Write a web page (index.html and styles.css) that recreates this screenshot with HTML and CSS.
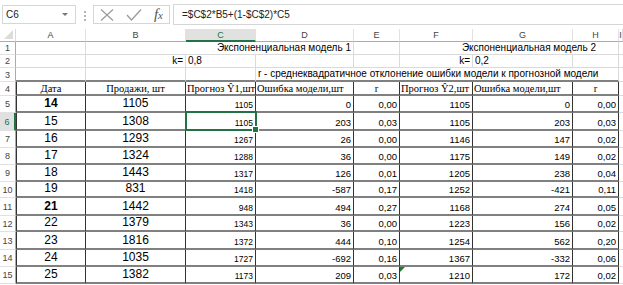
FILE: index.html
```html
<!DOCTYPE html>
<html lang="ru">
<head>
  <meta charset="UTF-8">
  <title>Экспоненциальная модель</title>
  <link rel="stylesheet" href="styles.css">
</head>
<body>

  <div class="fbar">
    <div class="namebox"><span>C6</span><span class="caret"></span></div>
    <div class="grip"></div>
    <div class="fbtns">
      <svg width="14" height="12" viewBox="0 0 14 12"><path d="M1 0.5 L13 11.5 M13 0.5 L1 11.5" stroke="#9a9a9a" stroke-width="1.2" fill="none"/></svg>
      <svg width="16" height="12" viewBox="0 0 16 12"><path d="M1 6 L5.5 11 L15 0.5" stroke="#9a9a9a" stroke-width="1.3" fill="none"/></svg>
      <span class="fx">f<i>x</i></span>
    </div>
    <div class="formula">=$C$2*B5+(1-$C$2)*C5</div>
  </div>

  <div class="sheet" id="sheet"></div>

  <script>
    const sheet = document.getElementById('sheet');

    const data = [
      [5, '14', '1105', '1105', '0', '0,00', '1105', '0', '0,00'],
      [6, '15', '1308', '1105', '203', '0,03', '1105', '203', '0,03'],
      [7, '16', '1293', '1267', '26', '0,00', '1146', '147', '0,02'],
      [8, '17', '1324', '1288', '36', '0,00', '1175', '149', '0,02'],
      [9, '18', '1443', '1317', '126', '0,01', '1205', '238', '0,04'],
      [10, '19', '831', '1418', '-587', '0,17', '1252', '-421', '0,11'],
      [11, '21', '1442', '948', '494', '0,27', '1168', '274', '0,05'],
      [12, '22', '1379', '1343', '36', '0,00', '1223', '156', '0,02'],
      [13, '23', '1816', '1372', '444', '0,10', '1254', '562', '0,20'],
      [14, '24', '1035', '1727', '-692', '0,16', '1367', '-332', '0,06'],
      [15, '25', '1382', '1173', '209', '0,03', '1210', '172', '0,02']
    ];

    function cell(cls, text) {
      const d = document.createElement('div');
      d.className = 'c ' + cls;
      if (text) d.textContent = text;
      sheet.appendChild(d);
      return d;
    }

    // заголовки столбцов
    cell('corner');
    ['A', 'B', 'C', 'D', 'E', 'F', 'G', 'H', 'I'].forEach(l => {
      cell('ch' + (l === 'C' ? ' ch-sel' : ''), l);
    });

    // строка 1
    cell('rh', '1');
    cell('g');
    cell('g span3 right', 'Экспоненциальная модель 1');
    cell('g');
    cell('g span3 right m2', 'Экспоненциальная модель 2');
    cell('g');

    // строка 2
    cell('rh', '2');
    cell('g');
    cell('g right', 'k=');
    cell('g', '0,8');
    cell('g'); cell('g');
    cell('g right', 'k=');
    cell('g', '0,2');
    cell('g'); cell('g');

    // строка 3
    cell('rh', '3');
    cell('g top');
    cell('g top');
    cell('g top');
    cell('g top span5', 'r - среднеквадратичное отклонение ошибки модели к прогнозной модели');
    cell('g');

    // строка 4 — шапка таблицы
    cell('rh', '4');
    cell('t first hd center', 'Дата');
    cell('t hd center', 'Продажи, шт');
    cell('t hd', 'Прогноз Ŷ1,шт');
    cell('t hd', 'Ошибка модели,шт');
    cell('t hd center', 'r');
    cell('t hd', 'Прогноз Ŷ2,шт');
    cell('t hd', 'Ошибка модели,шт');
    cell('t hd center', 'r');
    cell('g');

    data.forEach(r => {
      const n = r[0];
      cell('rh' + (n === 6 ? ' rh-sel' : ''), String(n));
      cell('t first big center' + (n === 5 || n === 11 ? ' bold' : ''), r[1]);
      cell('t big center', r[2]);
      cell('t small right' + (n === 6 ? ' active' : ''), r[3]);
      cell('t num right', r[4]);
      cell('t num right', r[5]);
      cell('t num right' + (n === 15 ? ' flag' : ''), r[6]);
      cell('t num right', r[7]);
      cell('t num right', r[8]);
      cell('g');
    });
  </script>
</body>
</html>
```

FILE: styles.css
```css
body {
  margin: 0;
  width: 623px;
  height: 285px;
  overflow: hidden;
  background-color: #fff;
  font-family: "Liberation Sans", Arial, sans-serif;
  color: #000;
}

/* строка формул */
.fbar {
  display: flex;
  align-items: flex-start;
  height: 29px;
  padding-top: 4px;
  box-sizing: border-box;
}

.namebox {
  margin: 1px 0 0 2px;
  width: 74px;
  height: 19px;
  border: 1px solid #d6d6d6;
  box-sizing: border-box;
  display: flex;
  align-items: center;
  justify-content: space-between;
  padding: 0 7px 0 3px;
  font-size: 10px;
  color: #222;
}

.caret {
  border-left: 3px solid transparent;
  border-right: 3px solid transparent;
  border-top: 3px solid #777;
}

.grip {
  margin: 7px 7px 0 8px;
  height: 10px;
  border-left: 2px dotted #b5b5b5;
}

.fbtns {
  margin-top: 1px;
  width: 77px;
  height: 19px;
  border: 1px solid #d6d6d6;
  box-sizing: border-box;
  display: flex;
  align-items: center;
  justify-content: space-between;
  padding: 0 6px 0 6px;
}

.fx {
  font-family: "Liberation Serif", serif;
  font-style: italic;
  font-size: 15px;
  color: #555;
  line-height: 1;
}

.fx i {
  font-size: 11px;
}

.formula {
  flex: 1;
  margin-left: 3px;
  height: 21px;
  border: 1px solid #d6d6d6;
  border-right: none;
  box-sizing: border-box;
  padding-left: 8px;
  font-size: 10px;
  line-height: 19px;
  color: #222;
}

/* лист */
.sheet {
  display: grid;
  grid-template-columns: 16px 70px 100px 70px 98px 46px 73px 100px 46px 4px;
  grid-template-rows: 13px 13px 13px 14px 14px 17px 18px 17px 17px 17px 16px 18px 16px 18px 17px 17px;
}

.c {
  box-sizing: border-box;
  display: flex;
  align-items: flex-end;
  padding: 0 2px 1px;
  white-space: nowrap;
  font-size: 10px;
  position: relative;
}

.g {
  border-right: 1px solid #dadada;
  border-bottom: 1px solid #dadada;
}

.corner {
  border-right: 1px solid #dadada;
  border-bottom: 1px solid #ababab;
}

.corner::after {
  content: "";
  position: absolute;
  right: 2px;
  bottom: 2px;
  border-left: 9px solid transparent;
  border-bottom: 9px solid #dcdcdc;
}

.ch {
  justify-content: center;
  align-items: center;
  padding: 0;
  font-size: 9px;
  color: #444;
  border-right: 1px solid #e1e1e1;
  border-bottom: 1px solid #ababab;
}

.ch-sel {
  background-color: #e1e1e1;
  color: #217346;
  border-bottom: 2px solid #217346;
}

.rh {
  justify-content: center;
  align-items: center;
  padding: 0;
  font-size: 9px;
  color: #444;
  border-right: 1px solid #ababab;
  border-bottom: 1px solid #e1e1e1;
}

.rh-sel {
  background-color: #e1e1e1;
  color: #217346;
  border-right: 2px solid #217346;
}

.span3 {
  grid-column: span 3;
}

.span5 {
  grid-column: span 5;
}

.right {
  justify-content: flex-end;
}

.center {
  justify-content: center;
}

.m2 {
  padding-right: 22px;
}

.top {
  border-bottom: 2px solid #808080;
}

/* таблица */
.t {
  border-right: 1px solid #333;
  border-bottom: 2px solid #808080;
}

.first {
  border-left: 1px solid #333;
}

.hd {
  font-family: "Liberation Serif", "Times New Roman", serif;
  font-size: 10.5px;
  padding: 0 1px 0;
}

.big {
  font-size: 12px;
  padding-bottom: 1px;
}

.bold {
  font-weight: bold;
}

.small {
  font-size: 8.5px;
}

.num {
  font-size: 9.5px;
}

.active::after {
  content: "";
  position: absolute;
  left: -1px;
  top: -2px;
  right: -2px;
  bottom: -2px;
  border: 2px solid #217346;
}

.active::before {
  content: "";
  position: absolute;
  right: -4px;
  bottom: -4px;
  width: 5px;
  height: 5px;
  background-color: #217346;
  border: 1px solid #fff;
  z-index: 1;
}

.flag::after {
  content: "";
  position: absolute;
  left: 0;
  top: 0;
  border-top: 5px solid #1e7b34;
  border-right: 5px solid transparent;
}
```
